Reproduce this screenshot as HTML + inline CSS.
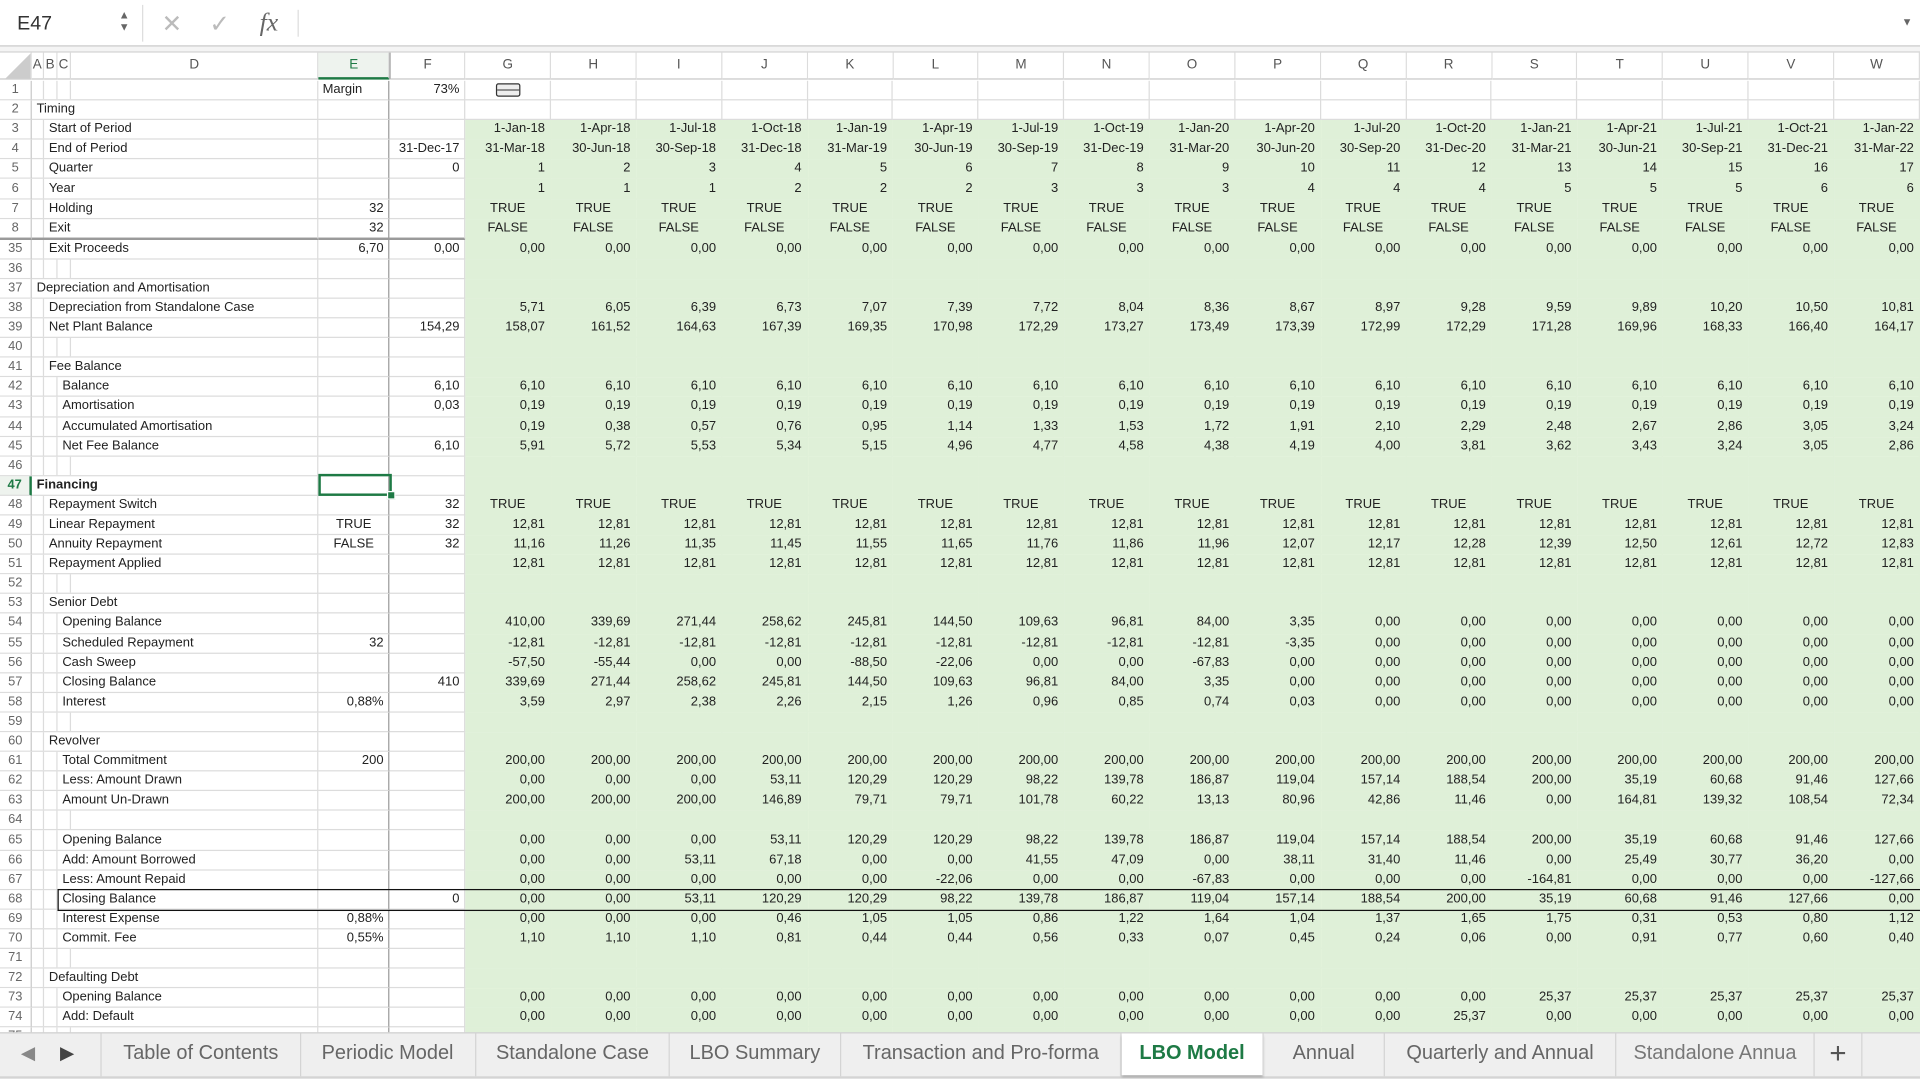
<!DOCTYPE html>
<html><head><meta charset="utf-8">
<style>
html,body{margin:0;padding:0;background:#fff;overflow:hidden;width:1920px;height:1078px}
#root{position:absolute;left:0;top:0;width:1568px;height:881px;transform:scale(1.22449);transform-origin:0 0;overflow:hidden;font-family:"Liberation Sans",Arial,sans-serif;color:#222}
#fb{position:absolute;left:0;top:0;width:1568px;height:37px;border-bottom:1px solid #c8c8c8;background:#fff}
#gap{position:absolute;left:0;top:38px;width:1568px;height:4px;background:#f4f4f4;border-bottom:1px solid #d0d0d0}
table{position:absolute;left:0;top:43px;border-collapse:separate;border-spacing:0;table-layout:fixed;font-size:10.6px}
td,th{padding:0;border-right:1px solid #dcdcdc;border-bottom:1px solid #dcdcdc;height:15.1px;line-height:15px;white-space:nowrap;overflow:hidden;box-sizing:border-box}
tr{height:16.1px}
tr.h th{height:22px;font-weight:normal;color:#555;font-size:11px;text-align:center;background:#fff;border-bottom:1px solid #c8c8c8}
th.r{font-weight:normal;color:#666;font-size:10.5px;text-align:center;background:#fff;border-right:1px solid #c8c8c8}
td{text-align:right;padding-right:4px}
td.l{text-align:left;padding-right:0;overflow:visible}
.l0{padding-left:4px}
.l1{padding-left:14px;background:linear-gradient(#dcdcdc,#dcdcdc) no-repeat 9px 0/1px 100%}
.l2{padding-left:25px;background:linear-gradient(#dcdcdc,#dcdcdc) no-repeat 9px 0/1px 100%,linear-gradient(#dcdcdc,#dcdcdc) no-repeat 20px 0/1px 100%}
.le{background:linear-gradient(#dcdcdc,#dcdcdc) no-repeat 9px 0/1px 100%,linear-gradient(#dcdcdc,#dcdcdc) no-repeat 20px 0/1px 100%,linear-gradient(#dcdcdc,#dcdcdc) no-repeat 31px 0/1px 100%}
td.c{text-align:center;padding-right:0}
tr.g td:nth-child(n+5){background:#dff0d8;border-color:#dff0d8}
td.e{border-right:1px solid #9a9a9a}
#tabs{position:absolute;left:0;top:843px;width:1568px;height:35px;background:#efefef;border-top:1px solid #cfcfcf;border-bottom:2px solid #d4d4d4}
.tab{position:absolute;top:0;height:35px;line-height:33px;font-size:16.3px;color:#666;text-align:center;border-right:1px solid #d4d4d4}
.tab.act{background:#fff;color:#1e7a45;font-weight:bold;box-shadow:0 2px 2px rgba(0,0,0,.25);height:34px}
</style></head><body><div id="root">
<div id="fb">
 <div style="position:absolute;left:14px;top:11px;font-size:16px;color:#333">E47</div>
 <div style="position:absolute;left:97px;top:7px;font-size:9px;color:#666;line-height:10px">▲<br>▼</div>
 <div style="position:absolute;left:116px;top:4px;width:1px;height:30px;background:#ddd"></div>
 <div style="position:absolute;left:132px;top:7px;font-size:20px;color:#bbb">✕</div>
 <div style="position:absolute;left:171px;top:7px;font-size:20px;color:#bbb">✓</div>
 <div style="position:absolute;left:212px;top:6px;font-size:21px;color:#666;font-family:'Liberation Serif',serif;font-style:italic">fx</div>
 <div style="position:absolute;left:243px;top:8px;width:1px;height:22px;background:#ddd"></div>
 <div style="position:absolute;left:1553px;top:13px;font-size:9px;color:#666">▼</div>
</div>
<div id="gap"></div>
<table>
<colgroup><col style="width:26px"><col style="width:10px"><col style="width:11px"><col style="width:11px"><col style="width:203px"><col style="width:58px"><col style="width:62px"><col span="16" style="width:70px"><col style="width:70px"></colgroup>
<tr class="h"><th style="background:linear-gradient(135deg,#fff 55%,#ccc 56%)"></th><th>A</th><th>B</th><th>C</th><th>D</th><th style="color:#1e7a45;border-bottom:2px solid #1e7a45;background:#eef3ee">E</th><th style="border-left:1px solid #9a9a9a">F</th><th>G</th><th>H</th><th>I</th><th>J</th><th>K</th><th>L</th><th>M</th><th>N</th><th>O</th><th>P</th><th>Q</th><th>R</th><th>S</th><th>T</th><th>U</th><th>V</th><th>W</th></tr>
</table>
<table style="top:66px">
<colgroup><col style="width:26px"><col style="width:235px"><col style="width:58px"><col style="width:62px"><col span="16" style="width:70px"><col style="width:70px"></colgroup>
<tr><th class="r">1</th><td class="l le"></td><td class="l e" style="padding-left:3px">Margin</td><td>73%</td><td class="c"><span style="display:inline-block;width:18px;height:9px;border:1.5px solid #333;border-radius:2px;background:linear-gradient(#eee 45%,#333 46%,#333 55%,#eee 56%);vertical-align:middle"></span></td><td></td><td></td><td></td><td></td><td></td><td></td><td></td><td></td><td></td><td></td><td></td><td></td><td></td><td></td><td></td><td></td></tr>
<tr><th class="r">2</th><td class="l l0">Timing</td><td class="e"></td><td></td><td></td><td></td><td></td><td></td><td></td><td></td><td></td><td></td><td></td><td></td><td></td><td></td><td></td><td></td><td></td><td></td><td></td></tr>
<tr class="g"><th class="r">3</th><td class="l l1">Start of Period</td><td class="e"></td><td></td><td>1-Jan-18</td><td>1-Apr-18</td><td>1-Jul-18</td><td>1-Oct-18</td><td>1-Jan-19</td><td>1-Apr-19</td><td>1-Jul-19</td><td>1-Oct-19</td><td>1-Jan-20</td><td>1-Apr-20</td><td>1-Jul-20</td><td>1-Oct-20</td><td>1-Jan-21</td><td>1-Apr-21</td><td>1-Jul-21</td><td>1-Oct-21</td><td>1-Jan-22</td></tr>
<tr class="g"><th class="r">4</th><td class="l l1">End of Period</td><td class="e"></td><td>31-Dec-17</td><td>31-Mar-18</td><td>30-Jun-18</td><td>30-Sep-18</td><td>31-Dec-18</td><td>31-Mar-19</td><td>30-Jun-19</td><td>30-Sep-19</td><td>31-Dec-19</td><td>31-Mar-20</td><td>30-Jun-20</td><td>30-Sep-20</td><td>31-Dec-20</td><td>31-Mar-21</td><td>30-Jun-21</td><td>30-Sep-21</td><td>31-Dec-21</td><td>31-Mar-22</td></tr>
<tr class="g"><th class="r">5</th><td class="l l1">Quarter</td><td class="e"></td><td>0</td><td>1</td><td>2</td><td>3</td><td>4</td><td>5</td><td>6</td><td>7</td><td>8</td><td>9</td><td>10</td><td>11</td><td>12</td><td>13</td><td>14</td><td>15</td><td>16</td><td>17</td></tr>
<tr class="g"><th class="r">6</th><td class="l l1">Year</td><td class="e"></td><td></td><td>1</td><td>1</td><td>1</td><td>2</td><td>2</td><td>2</td><td>3</td><td>3</td><td>3</td><td>4</td><td>4</td><td>4</td><td>5</td><td>5</td><td>5</td><td>6</td><td>6</td></tr>
<tr class="g"><th class="r">7</th><td class="l l1">Holding</td><td class="e">32</td><td></td><td class="c">TRUE</td><td class="c">TRUE</td><td class="c">TRUE</td><td class="c">TRUE</td><td class="c">TRUE</td><td class="c">TRUE</td><td class="c">TRUE</td><td class="c">TRUE</td><td class="c">TRUE</td><td class="c">TRUE</td><td class="c">TRUE</td><td class="c">TRUE</td><td class="c">TRUE</td><td class="c">TRUE</td><td class="c">TRUE</td><td class="c">TRUE</td><td class="c">TRUE</td></tr>
<tr class="g"><th class="r" style="border-bottom:2px solid #9a9a9a">8</th><td class="l l1" style="border-bottom:2px solid #9a9a9a">Exit</td><td class="e" style="border-bottom:2px solid #9a9a9a">32</td><td style="border-bottom:2px solid #9a9a9a"></td><td class="c">FALSE</td><td class="c">FALSE</td><td class="c">FALSE</td><td class="c">FALSE</td><td class="c">FALSE</td><td class="c">FALSE</td><td class="c">FALSE</td><td class="c">FALSE</td><td class="c">FALSE</td><td class="c">FALSE</td><td class="c">FALSE</td><td class="c">FALSE</td><td class="c">FALSE</td><td class="c">FALSE</td><td class="c">FALSE</td><td class="c">FALSE</td><td class="c">FALSE</td></tr>
<tr class="g"><th class="r">35</th><td class="l l1">Exit Proceeds</td><td class="e">6,70</td><td>0,00</td><td>0,00</td><td>0,00</td><td>0,00</td><td>0,00</td><td>0,00</td><td>0,00</td><td>0,00</td><td>0,00</td><td>0,00</td><td>0,00</td><td>0,00</td><td>0,00</td><td>0,00</td><td>0,00</td><td>0,00</td><td>0,00</td><td>0,00</td></tr>
<tr class="g"><th class="r">36</th><td class="l le"></td><td class="e"></td><td></td><td></td><td></td><td></td><td></td><td></td><td></td><td></td><td></td><td></td><td></td><td></td><td></td><td></td><td></td><td></td><td></td><td></td></tr>
<tr class="g"><th class="r">37</th><td class="l l0">Depreciation and Amortisation</td><td class="e"></td><td></td><td></td><td></td><td></td><td></td><td></td><td></td><td></td><td></td><td></td><td></td><td></td><td></td><td></td><td></td><td></td><td></td><td></td></tr>
<tr class="g"><th class="r">38</th><td class="l l1">Depreciation from Standalone Case</td><td class="e"></td><td></td><td>5,71</td><td>6,05</td><td>6,39</td><td>6,73</td><td>7,07</td><td>7,39</td><td>7,72</td><td>8,04</td><td>8,36</td><td>8,67</td><td>8,97</td><td>9,28</td><td>9,59</td><td>9,89</td><td>10,20</td><td>10,50</td><td>10,81</td></tr>
<tr class="g"><th class="r">39</th><td class="l l1">Net Plant Balance</td><td class="e"></td><td>154,29</td><td>158,07</td><td>161,52</td><td>164,63</td><td>167,39</td><td>169,35</td><td>170,98</td><td>172,29</td><td>173,27</td><td>173,49</td><td>173,39</td><td>172,99</td><td>172,29</td><td>171,28</td><td>169,96</td><td>168,33</td><td>166,40</td><td>164,17</td></tr>
<tr class="g"><th class="r">40</th><td class="l le"></td><td class="e"></td><td></td><td></td><td></td><td></td><td></td><td></td><td></td><td></td><td></td><td></td><td></td><td></td><td></td><td></td><td></td><td></td><td></td><td></td></tr>
<tr class="g"><th class="r">41</th><td class="l l1">Fee Balance</td><td class="e"></td><td></td><td></td><td></td><td></td><td></td><td></td><td></td><td></td><td></td><td></td><td></td><td></td><td></td><td></td><td></td><td></td><td></td><td></td></tr>
<tr class="g"><th class="r">42</th><td class="l l2">Balance</td><td class="e"></td><td>6,10</td><td>6,10</td><td>6,10</td><td>6,10</td><td>6,10</td><td>6,10</td><td>6,10</td><td>6,10</td><td>6,10</td><td>6,10</td><td>6,10</td><td>6,10</td><td>6,10</td><td>6,10</td><td>6,10</td><td>6,10</td><td>6,10</td><td>6,10</td></tr>
<tr class="g"><th class="r">43</th><td class="l l2">Amortisation</td><td class="e"></td><td>0,03</td><td>0,19</td><td>0,19</td><td>0,19</td><td>0,19</td><td>0,19</td><td>0,19</td><td>0,19</td><td>0,19</td><td>0,19</td><td>0,19</td><td>0,19</td><td>0,19</td><td>0,19</td><td>0,19</td><td>0,19</td><td>0,19</td><td>0,19</td></tr>
<tr class="g"><th class="r">44</th><td class="l l2">Accumulated Amortisation</td><td class="e"></td><td></td><td>0,19</td><td>0,38</td><td>0,57</td><td>0,76</td><td>0,95</td><td>1,14</td><td>1,33</td><td>1,53</td><td>1,72</td><td>1,91</td><td>2,10</td><td>2,29</td><td>2,48</td><td>2,67</td><td>2,86</td><td>3,05</td><td>3,24</td></tr>
<tr class="g"><th class="r">45</th><td class="l l2">Net Fee Balance</td><td class="e"></td><td>6,10</td><td>5,91</td><td>5,72</td><td>5,53</td><td>5,34</td><td>5,15</td><td>4,96</td><td>4,77</td><td>4,58</td><td>4,38</td><td>4,19</td><td>4,00</td><td>3,81</td><td>3,62</td><td>3,43</td><td>3,24</td><td>3,05</td><td>2,86</td></tr>
<tr class="g"><th class="r">46</th><td class="l le"></td><td class="e"></td><td></td><td></td><td></td><td></td><td></td><td></td><td></td><td></td><td></td><td></td><td></td><td></td><td></td><td></td><td></td><td></td><td></td><td></td></tr>
<tr class="g"><th class="r" style="color:#1e7a45;font-weight:bold;border-right:2px solid #1e7a45;background:#eef3ee">47</th><td class="l l0" style="font-weight:bold">Financing</td><td class="e"></td><td></td><td></td><td></td><td></td><td></td><td></td><td></td><td></td><td></td><td></td><td></td><td></td><td></td><td></td><td></td><td></td><td></td><td></td></tr>
<tr class="g"><th class="r">48</th><td class="l l1">Repayment Switch</td><td class="e"></td><td>32</td><td class="c">TRUE</td><td class="c">TRUE</td><td class="c">TRUE</td><td class="c">TRUE</td><td class="c">TRUE</td><td class="c">TRUE</td><td class="c">TRUE</td><td class="c">TRUE</td><td class="c">TRUE</td><td class="c">TRUE</td><td class="c">TRUE</td><td class="c">TRUE</td><td class="c">TRUE</td><td class="c">TRUE</td><td class="c">TRUE</td><td class="c">TRUE</td><td class="c">TRUE</td></tr>
<tr class="g"><th class="r">49</th><td class="l l1">Linear Repayment</td><td class="e c">TRUE</td><td>32</td><td>12,81</td><td>12,81</td><td>12,81</td><td>12,81</td><td>12,81</td><td>12,81</td><td>12,81</td><td>12,81</td><td>12,81</td><td>12,81</td><td>12,81</td><td>12,81</td><td>12,81</td><td>12,81</td><td>12,81</td><td>12,81</td><td>12,81</td></tr>
<tr class="g"><th class="r">50</th><td class="l l1">Annuity Repayment</td><td class="e c">FALSE</td><td>32</td><td>11,16</td><td>11,26</td><td>11,35</td><td>11,45</td><td>11,55</td><td>11,65</td><td>11,76</td><td>11,86</td><td>11,96</td><td>12,07</td><td>12,17</td><td>12,28</td><td>12,39</td><td>12,50</td><td>12,61</td><td>12,72</td><td>12,83</td></tr>
<tr class="g"><th class="r">51</th><td class="l l1">Repayment Applied</td><td class="e"></td><td></td><td>12,81</td><td>12,81</td><td>12,81</td><td>12,81</td><td>12,81</td><td>12,81</td><td>12,81</td><td>12,81</td><td>12,81</td><td>12,81</td><td>12,81</td><td>12,81</td><td>12,81</td><td>12,81</td><td>12,81</td><td>12,81</td><td>12,81</td></tr>
<tr class="g"><th class="r">52</th><td class="l le"></td><td class="e"></td><td></td><td></td><td></td><td></td><td></td><td></td><td></td><td></td><td></td><td></td><td></td><td></td><td></td><td></td><td></td><td></td><td></td><td></td></tr>
<tr class="g"><th class="r">53</th><td class="l l1">Senior Debt</td><td class="e"></td><td></td><td></td><td></td><td></td><td></td><td></td><td></td><td></td><td></td><td></td><td></td><td></td><td></td><td></td><td></td><td></td><td></td><td></td></tr>
<tr class="g"><th class="r">54</th><td class="l l2">Opening Balance</td><td class="e"></td><td></td><td>410,00</td><td>339,69</td><td>271,44</td><td>258,62</td><td>245,81</td><td>144,50</td><td>109,63</td><td>96,81</td><td>84,00</td><td>3,35</td><td>0,00</td><td>0,00</td><td>0,00</td><td>0,00</td><td>0,00</td><td>0,00</td><td>0,00</td></tr>
<tr class="g"><th class="r">55</th><td class="l l2">Scheduled Repayment</td><td class="e">32</td><td></td><td>-12,81</td><td>-12,81</td><td>-12,81</td><td>-12,81</td><td>-12,81</td><td>-12,81</td><td>-12,81</td><td>-12,81</td><td>-12,81</td><td>-3,35</td><td>0,00</td><td>0,00</td><td>0,00</td><td>0,00</td><td>0,00</td><td>0,00</td><td>0,00</td></tr>
<tr class="g"><th class="r">56</th><td class="l l2">Cash Sweep</td><td class="e"></td><td></td><td>-57,50</td><td>-55,44</td><td>0,00</td><td>0,00</td><td>-88,50</td><td>-22,06</td><td>0,00</td><td>0,00</td><td>-67,83</td><td>0,00</td><td>0,00</td><td>0,00</td><td>0,00</td><td>0,00</td><td>0,00</td><td>0,00</td><td>0,00</td></tr>
<tr class="g"><th class="r">57</th><td class="l l2">Closing Balance</td><td class="e"></td><td>410</td><td>339,69</td><td>271,44</td><td>258,62</td><td>245,81</td><td>144,50</td><td>109,63</td><td>96,81</td><td>84,00</td><td>3,35</td><td>0,00</td><td>0,00</td><td>0,00</td><td>0,00</td><td>0,00</td><td>0,00</td><td>0,00</td><td>0,00</td></tr>
<tr class="g"><th class="r">58</th><td class="l l2">Interest</td><td class="e">0,88%</td><td></td><td>3,59</td><td>2,97</td><td>2,38</td><td>2,26</td><td>2,15</td><td>1,26</td><td>0,96</td><td>0,85</td><td>0,74</td><td>0,03</td><td>0,00</td><td>0,00</td><td>0,00</td><td>0,00</td><td>0,00</td><td>0,00</td><td>0,00</td></tr>
<tr class="g"><th class="r">59</th><td class="l le"></td><td class="e"></td><td></td><td></td><td></td><td></td><td></td><td></td><td></td><td></td><td></td><td></td><td></td><td></td><td></td><td></td><td></td><td></td><td></td><td></td></tr>
<tr class="g"><th class="r">60</th><td class="l l1">Revolver</td><td class="e"></td><td></td><td></td><td></td><td></td><td></td><td></td><td></td><td></td><td></td><td></td><td></td><td></td><td></td><td></td><td></td><td></td><td></td><td></td></tr>
<tr class="g"><th class="r">61</th><td class="l l2">Total Commitment</td><td class="e">200</td><td></td><td>200,00</td><td>200,00</td><td>200,00</td><td>200,00</td><td>200,00</td><td>200,00</td><td>200,00</td><td>200,00</td><td>200,00</td><td>200,00</td><td>200,00</td><td>200,00</td><td>200,00</td><td>200,00</td><td>200,00</td><td>200,00</td><td>200,00</td></tr>
<tr class="g"><th class="r">62</th><td class="l l2">Less: Amount Drawn</td><td class="e"></td><td></td><td>0,00</td><td>0,00</td><td>0,00</td><td>53,11</td><td>120,29</td><td>120,29</td><td>98,22</td><td>139,78</td><td>186,87</td><td>119,04</td><td>157,14</td><td>188,54</td><td>200,00</td><td>35,19</td><td>60,68</td><td>91,46</td><td>127,66</td></tr>
<tr class="g"><th class="r">63</th><td class="l l2">Amount Un-Drawn</td><td class="e"></td><td></td><td>200,00</td><td>200,00</td><td>200,00</td><td>146,89</td><td>79,71</td><td>79,71</td><td>101,78</td><td>60,22</td><td>13,13</td><td>80,96</td><td>42,86</td><td>11,46</td><td>0,00</td><td>164,81</td><td>139,32</td><td>108,54</td><td>72,34</td></tr>
<tr class="g"><th class="r">64</th><td class="l le"></td><td class="e"></td><td></td><td></td><td></td><td></td><td></td><td></td><td></td><td></td><td></td><td></td><td></td><td></td><td></td><td></td><td></td><td></td><td></td><td></td></tr>
<tr class="g"><th class="r">65</th><td class="l l2">Opening Balance</td><td class="e"></td><td></td><td>0,00</td><td>0,00</td><td>0,00</td><td>53,11</td><td>120,29</td><td>120,29</td><td>98,22</td><td>139,78</td><td>186,87</td><td>119,04</td><td>157,14</td><td>188,54</td><td>200,00</td><td>35,19</td><td>60,68</td><td>91,46</td><td>127,66</td></tr>
<tr class="g"><th class="r">66</th><td class="l l2">Add: Amount Borrowed</td><td class="e"></td><td></td><td>0,00</td><td>0,00</td><td>53,11</td><td>67,18</td><td>0,00</td><td>0,00</td><td>41,55</td><td>47,09</td><td>0,00</td><td>38,11</td><td>31,40</td><td>11,46</td><td>0,00</td><td>25,49</td><td>30,77</td><td>36,20</td><td>0,00</td></tr>
<tr class="g"><th class="r">67</th><td class="l l2">Less: Amount Repaid</td><td class="e"></td><td></td><td>0,00</td><td>0,00</td><td>0,00</td><td>0,00</td><td>0,00</td><td>-22,06</td><td>0,00</td><td>0,00</td><td>-67,83</td><td>0,00</td><td>0,00</td><td>0,00</td><td>-164,81</td><td>0,00</td><td>0,00</td><td>0,00</td><td>-127,66</td></tr>
<tr class="g"><th class="r">68</th><td class="l l2">Closing Balance</td><td class="e"></td><td>0</td><td>0,00</td><td>0,00</td><td>53,11</td><td>120,29</td><td>120,29</td><td>98,22</td><td>139,78</td><td>186,87</td><td>119,04</td><td>157,14</td><td>188,54</td><td>200,00</td><td>35,19</td><td>60,68</td><td>91,46</td><td>127,66</td><td>0,00</td></tr>
<tr class="g"><th class="r">69</th><td class="l l2">Interest Expense</td><td class="e">0,88%</td><td></td><td>0,00</td><td>0,00</td><td>0,00</td><td>0,46</td><td>1,05</td><td>1,05</td><td>0,86</td><td>1,22</td><td>1,64</td><td>1,04</td><td>1,37</td><td>1,65</td><td>1,75</td><td>0,31</td><td>0,53</td><td>0,80</td><td>1,12</td></tr>
<tr class="g"><th class="r">70</th><td class="l l2">Commit. Fee</td><td class="e">0,55%</td><td></td><td>1,10</td><td>1,10</td><td>1,10</td><td>0,81</td><td>0,44</td><td>0,44</td><td>0,56</td><td>0,33</td><td>0,07</td><td>0,45</td><td>0,24</td><td>0,06</td><td>0,00</td><td>0,91</td><td>0,77</td><td>0,60</td><td>0,40</td></tr>
<tr class="g"><th class="r">71</th><td class="l le"></td><td class="e"></td><td></td><td></td><td></td><td></td><td></td><td></td><td></td><td></td><td></td><td></td><td></td><td></td><td></td><td></td><td></td><td></td><td></td><td></td></tr>
<tr class="g"><th class="r">72</th><td class="l l1">Defaulting Debt</td><td class="e"></td><td></td><td></td><td></td><td></td><td></td><td></td><td></td><td></td><td></td><td></td><td></td><td></td><td></td><td></td><td></td><td></td><td></td><td></td></tr>
<tr class="g"><th class="r">73</th><td class="l l2">Opening Balance</td><td class="e"></td><td></td><td>0,00</td><td>0,00</td><td>0,00</td><td>0,00</td><td>0,00</td><td>0,00</td><td>0,00</td><td>0,00</td><td>0,00</td><td>0,00</td><td>0,00</td><td>0,00</td><td>25,37</td><td>25,37</td><td>25,37</td><td>25,37</td><td>25,37</td></tr>
<tr class="g"><th class="r">74</th><td class="l l2">Add: Default</td><td class="e"></td><td></td><td>0,00</td><td>0,00</td><td>0,00</td><td>0,00</td><td>0,00</td><td>0,00</td><td>0,00</td><td>0,00</td><td>0,00</td><td>0,00</td><td>0,00</td><td>25,37</td><td>0,00</td><td>0,00</td><td>0,00</td><td>0,00</td><td>0,00</td></tr>
<tr class="g"><th class="r">75</th><td class="l le"></td><td class="e"></td><td></td><td></td><td></td><td></td><td></td><td></td><td></td><td></td><td></td><td></td><td></td><td></td><td></td><td></td><td></td><td></td><td></td><td></td></tr>
</table>
<div style="position:absolute;left:47px;top:726px;width:1530px;height:16px;border-top:1px solid #111;border-bottom:1px solid #111;border-left:1px solid #111"></div>
<div style="position:absolute;left:260px;top:387px;width:56px;height:14px;border:2px solid #1e7a45"></div>
<div style="position:absolute;left:316px;top:401px;width:5px;height:5px;background:#1e7a45;border:1px solid #fff"></div>
<div id="tabs">
 <div style="position:absolute;left:17px;top:7px;font-size:15px;color:#888">◀</div>
 <div style="position:absolute;left:49px;top:7px;font-size:15px;color:#444">▶</div>
 <div class="tab" style="left:82px;width:162px;border-left:1px solid #d4d4d4">Table of Contents</div>
 <div class="tab" style="left:245px;width:143px">Periodic Model</div>
 <div class="tab" style="left:389px;width:157px">Standalone Case</div>
 <div class="tab" style="left:547px;width:139px">LBO Summary</div>
 <div class="tab" style="left:687px;width:228px">Transaction and Pro-forma</div>
 <div class="tab act" style="left:916px;width:115px">LBO Model</div>
 <div class="tab" style="left:1032px;width:98px">Annual</div>
 <div class="tab" style="left:1131px;width:188px">Quarterly and Annual</div>
 <div class="tab" style="left:1320px;width:161px;overflow:hidden;text-align:left"><span style="padding-left:14px;color:#777">Standalone Annua</span></div>
 <div class="tab" style="left:1482px;width:38px;font-size:24px;color:#555">+</div>
</div>
</div></body></html>
